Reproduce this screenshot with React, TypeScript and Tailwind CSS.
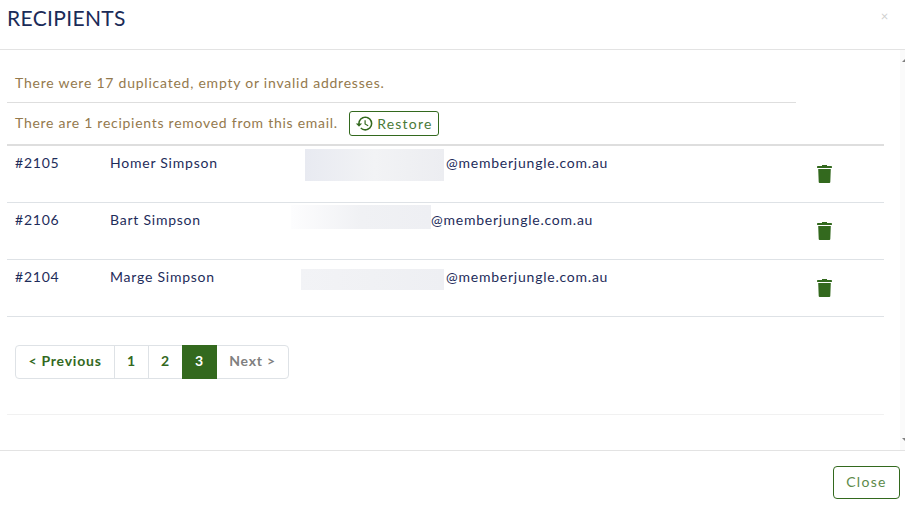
import { MdHistory } from "react-icons/md";

const rows = [
	{ id: "#2105", name: "Homer Simpson", blurClass: "left-[298px] top-[3px] h-[32px] w-[139px] from-[#e8eaf1] via-[#f2f3f5] to-[#ecedf1]", emailClass: "left-[439px]" },
	{ id: "#2106", name: "Bart Simpson", blurClass: "left-[284px] top-[2px] h-[24px] w-[140px] from-[#fdfdfe] via-[#f0f1f4] to-[#eeeff3]", emailClass: "left-[424px]" },
	{ id: "#2104", name: "Marge Simpson", blurClass: "left-[294px] top-[9px] h-[21px] w-[143px] from-[#f2f3f6] via-[#f0f1f4] to-[#eeeff3]", emailClass: "left-[439px]" },
];

const TrashIcon = () => (
	<svg viewBox="0 0 15 18" className="h-[18px] w-[15px] fill-[#33691e]">
		<rect x="5" y="0" width="5" height="1.2" />
		<rect x="0" y="1" width="15" height="2" rx="0.4" />
		<path d="M1.2 4h12.6l-.5 13a1 1 0 0 1-1 1H2.7a1 1 0 0 1-1-1z" />
	</svg>
);

const Row = ({ row }: { row: (typeof rows)[number] }) => (
	<div className="relative h-[57px] border-b border-[#dee2e6] text-[14px] leading-[21px] text-[#1e2c5a]">
		<div className={`absolute bg-gradient-to-r ${row.blurClass}`} />
		<div className="flex h-full items-start pt-[6px]">
			<span className="ml-[8px] w-[95px]">{row.id}</span>
			<span>{row.name}</span>
			<span className={`absolute ${row.emailClass}`}>@memberjungle.com.au</span>
			<span className="ml-auto mr-[52px] mt-[13px]">
				<TrashIcon />
			</span>
		</div>
	</div>
);

export default function App() {
	return (
		<div className="flex h-[507px] w-[905px] flex-col overflow-hidden bg-white font-['Lato','Noto_Sans',sans-serif] tracking-[0.77px]">
			{/* HEADER */}
			<header className="flex h-[50px] shrink-0 items-start justify-between border-b border-[#e3e3e3] pl-[7px] pr-[16px]">
				<h1 className="pt-[5px] text-[21px] leading-[26px] tracking-[0.35px] text-[#1b2b58]">RECIPIENTS</h1>
				<span className="pt-[8px] text-[13px] leading-[16px] text-[#cfcfcf]">×</span>
			</header>

			{/* BODY */}
			<div className="flex h-[400px] shrink-0">
				<div className="flex-1 pl-[7px] pr-[16px]">
					<div className="mr-[88px] h-[53px] border-b border-[#dedede] pl-[8px] pt-[22px] text-[14px] leading-[21px] text-[#94794d]">
						There were 17 duplicated, empty or invalid addresses.
					</div>
					<div className="flex h-[41px] items-center gap-[11px] pl-[8px] text-[14px] text-[#94794d]">
						<span className="-mt-[2px] tracking-[0.73px]">There are 1 recipients removed from this email.</span>
						<button className="flex h-[25px] w-[90px] items-center justify-center gap-[3px] rounded-[3px] border border-[#33691e] tracking-[1.2px] text-[#4a7a38]">
							<MdHistory className="h-[19px] w-[19px] text-[#33691e]" />
							<span className="-mt-[1px]">Restore</span>
						</button>
					</div>
					<div className="border-t-2 border-[#dedede]">
						{rows.map((row) => (
							<Row key={row.id} row={row} />
						))}
					</div>

					{/* PAGINATION */}
					<div className="ml-[8px] mt-[28px] flex h-[34px] w-[274px] rounded-[4px] border border-[#dee2e6] text-[14px] font-bold">
						<span className="flex w-[99px] items-center justify-center border-r border-[#dee2e6] pb-[4px] text-[#33691e]">&lt; Previous</span>
						<span className="flex w-[34px] items-center justify-center border-r border-[#dee2e6] pb-[4px] text-[#33691e]">1</span>
						<span className="flex w-[33px] items-center justify-center pb-[4px] text-[#33691e]">2</span>
						<span className="-my-px flex w-[35px] items-center justify-center bg-[#33691e] pb-[4px] text-white">3</span>
						<span className="flex flex-1 items-center justify-center pb-[4px] text-[#808080]">Next &gt;</span>
					</div>
					<div className="mt-[35px] h-px rounded bg-[#f1f1f1]" />
				</div>

				{/* SCROLLBAR */}
				<div className="flex w-[5px] flex-col justify-between bg-[#fafafa] py-[9px]">
					<div className="ml-[2px] h-0 w-0 border-x-[3px] border-b-[3px] border-x-transparent border-b-[#808080]" />
					<div className="ml-[2px] h-0 w-0 border-x-[3px] border-t-[3px] border-x-transparent border-t-[#808080]" />
				</div>
			</div>

			{/* FOOTER */}
			<footer className="flex flex-1 items-start justify-end border-t border-[#e3e3e3] pr-[5px] pt-[15px]">
				<button className="h-[33px] w-[67px] rounded-[4px] border border-[#33691e] pb-[2px] text-[14px] tracking-[1.3px] text-[#5c8a4a]">Close</button>
			</footer>
		</div>
	);
}
